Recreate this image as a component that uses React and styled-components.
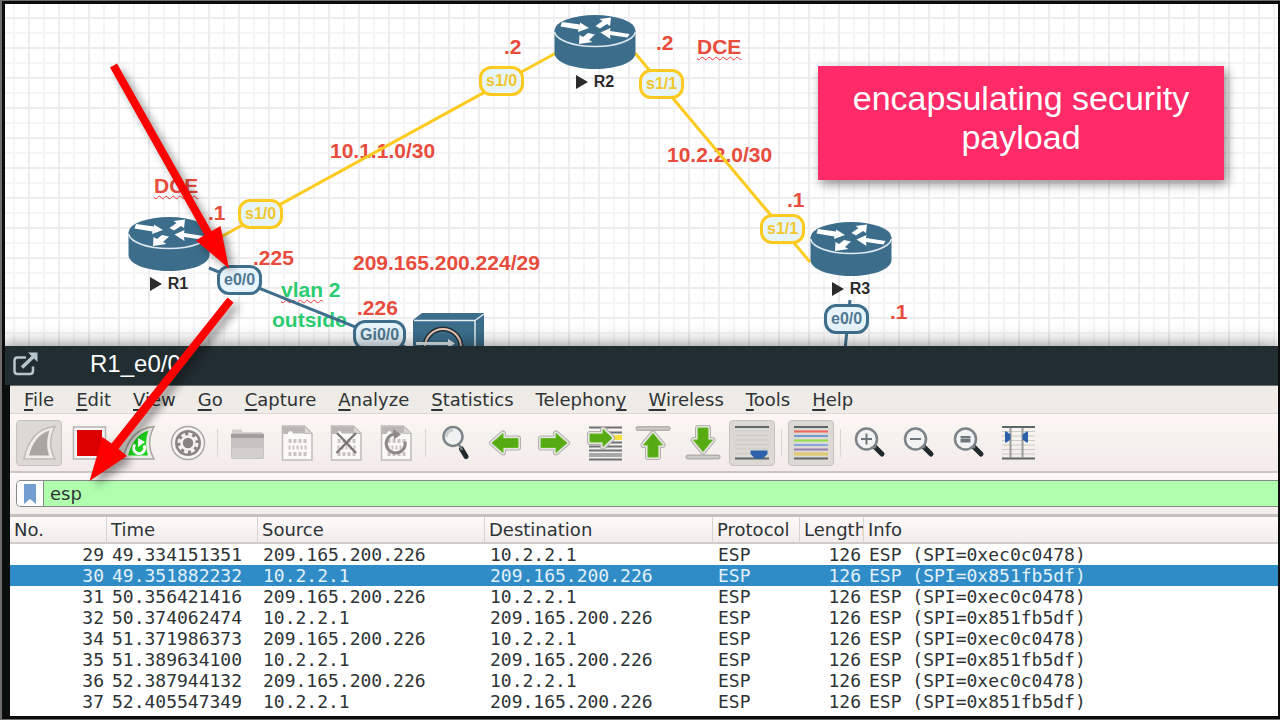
import React, { useState } from 'react';
import styled, { createGlobalStyle } from 'styled-components';

const menus = [
  ['', 'F', 'ile'],
  ['', 'E', 'dit'],
  ['', 'V', 'iew'],
  ['', 'G', 'o'],
  ['', 'C', 'apture'],
  ['', 'A', 'nalyze'],
  ['', 'S', 'tatistics'],
  ['Telephon', 'y', ''],
  ['', 'W', 'ireless'],
  ['', 'T', 'ools'],
  ['', 'H', 'elp'],
];

const columns = [
  { name: 'No.', width: 97, right: true },
  { name: 'Time', width: 151 },
  { name: 'Source', width: 227 },
  { name: 'Destination', width: 228 },
  { name: 'Protocol', width: 87 },
  { name: 'Length', width: 64, right: true },
  { name: 'Info' },
];

const PEER = '209.165.200.226';
const HOST = '10.2.2.1';

const packets = [
  [29, '49.334151351', PEER, HOST, 'ESP', 126, 'ESP (SPI=0xec0c0478)'],
  [30, '49.351882232', HOST, PEER, 'ESP', 126, 'ESP (SPI=0x851fb5df)'],
  [31, '50.356421416', PEER, HOST, 'ESP', 126, 'ESP (SPI=0xec0c0478)'],
  [32, '50.374062474', HOST, PEER, 'ESP', 126, 'ESP (SPI=0x851fb5df)'],
  [34, '51.371986373', PEER, HOST, 'ESP', 126, 'ESP (SPI=0xec0c0478)'],
  [35, '51.389634100', HOST, PEER, 'ESP', 126, 'ESP (SPI=0x851fb5df)'],
  [36, '52.387944132', PEER, HOST, 'ESP', 126, 'ESP (SPI=0xec0c0478)'],
  [37, '52.405547349', HOST, PEER, 'ESP', 126, 'ESP (SPI=0x851fb5df)'],
];

const notes = [
  { x: 504, y: 36, text: '.2' },
  { x: 656, y: 32, text: '.2' },
  { x: 697, y: 36, text: 'DCE', wavy: true },
  { x: 330, y: 140, text: '10.1.1.0/30' },
  { x: 667, y: 144, text: '10.2.2.0/30' },
  { x: 787, y: 189, text: '.1' },
  { x: 890, y: 301, text: '.1' },
  { x: 154, y: 175, text: 'DCE', wavy: true },
  { x: 208, y: 202, text: '.1' },
  { x: 253, y: 247, text: '.225' },
  { x: 353, y: 252, text: '209.165.200.224/29' },
  { x: 357, y: 297, text: '.226' },
];

const ports = [
  { x: 479, y: 66, text: 's1/0', serial: true },
  { x: 639, y: 69, text: 's1/1', serial: true },
  { x: 238, y: 199, text: 's1/0', serial: true },
  { x: 760, y: 214, text: 's1/1', serial: true },
  { x: 217, y: 265, text: 'e0/0' },
  { x: 824, y: 304, text: 'e0/0' },
  { x: 353, y: 320, text: 'Gi0/0' },
];

const routers = [
  { x: 554, y: 14, name: 'R2' },
  { x: 128, y: 216, name: 'R1' },
  { x: 810, y: 221, name: 'R3' },
];

const RouterIcon = () => (
  <svg width="82" height="56" viewBox="0 0 82 56">
    <path d="M0.5 17v22c0 9 18 16 40.500 16s40.500-7 40.500-16V17z" fill="#3c6e8b" />
    <ellipse cx="41" cy="16.500" rx="40.500" ry="15.500" fill="#3c6e8b" />
    <path d="M0.500 18c2 8 18 14.500 40.500 14.500S79.500 26 81.500 18" fill="none" stroke="#dfe9ef" strokeWidth="1.500" />
    <g fill="#fff">
      <path d="M8 8L26 10.500V8.500l9 5.500L24 18 24.500 15.500 6.500 12.500z" />
      <path d="M57 3.500L45.500 5l3 2-7 5 4.500 2.500 7-4.500 3 2z" />
      <path d="M25 30l0.500-9 3.500 2 5-4 7 1.500-6 5.500 3.500 2z" />
      <path d="M46.500 18.500l10-4.500-0.500 3L75.500 20l-2 3.500-17.500-2.500 0.500 4z" />
    </g>
  </svg>
);

const FirewallIcon = () => (
  <svg width="72" height="56" viewBox="0 0 72 56">
    <path d="M0 7L9 0h62v46l-9 10H0z" fill="#3c6e8b" />
    <path d="M1 7.500h61V56M62 7.500L71 1" fill="none" stroke="#e6eef3" strokeWidth="1.500" />
    <circle cx="30" cy="34" r="18" fill="none" stroke="#23313b" strokeWidth="5" />
    <circle cx="30" cy="34" r="18" fill="none" stroke="#e9c9b6" strokeWidth="2" />
    <path d="M3 29h32v-3l7 4.500-7 4.500v-3H3z" fill="#e6eef3" />
  </svg>
);

const PopoutIcon = () => (
  <svg width="26" height="26" viewBox="0 0 26 26" fill="none" stroke="#b6c5cc" strokeWidth="2.500">
    <path d="M13 6.500H4.500c-2 0-3 1-3 3V20c0 2 1 3 3 3H17c2 0 3-1 3-3v-4.500" />
    <path d="M9 16.500L22 4" strokeWidth="3.500" />
    <path d="M15 1.500h9.500V11z" fill="#b6c5cc" stroke="none" />
  </svg>
);

const FIN = 'M3 34C7 15 17 3 34 1.500 28.500 12 28.500 24 34 34z';
const FIN_INNER = 'M8 30.500C11 18 18 8.500 28.500 5.500 25.500 14 25.500 22 28 30.500z';
const LEFT = 'M5 18L16 8.500v5h15v9H16v5z';
const RIGHT = 'M31 18L20 8.500v5H5v9h15v5z';
const UP = 'M18 8.500L27.500 20H23v12H13V20H8.500z';
const DOWN = 'M18 26.500L8.500 15H13V3h10v12h4.500z';

const GreenArrow = ({ d }) => (
  <g strokeLinejoin="round">
    <path d={d} fill="none" stroke="#b3b1ae" strokeWidth="6" />
    <path d={d} fill="none" stroke="#e6e5e3" strokeWidth="4" />
    <path d={d} fill="#57ab12" stroke="#65b825" strokeWidth="1" />
  </g>
);

const Sheet = () => (
  <>
    <path d="M3.500 1h22L33 8.500V35H3.500z" fill="#fbfaf8" stroke="#bfbcb9" strokeWidth="1.500" />
    <path d="M4 1.500h21v7H14C13 5 10 5 8.500 9H4z" fill="#bab7b4" />
    <path d="M25.500 1v7.500H33z" fill="#d9d6d3" stroke="#bfbcb9" />
    <g stroke="#c7c4c1" strokeWidth="4" strokeDasharray="3 2">
      <path d="M9.500 16H28" />
      <path d="M9.500 22.500H28" strokeDasharray="2 2" />
      <path d="M9.500 29H28" />
    </g>
  </>
);

const Magnifier = ({ children }) => (
  <>
    <path d="M22.500 21.500L30 29" stroke="#202a2c" strokeWidth="5" strokeLinecap="round" />
    <path d="M20 19l4 4" stroke="#6d7476" strokeWidth="2.500" />
    <circle cx="14.500" cy="14" r="10.500" fill="#f2f4f4" stroke="#7d8588" strokeWidth="2.500" />
    <g stroke="#6f777a" strokeWidth="2">{children}</g>
  </>
);

const icons = {
  start: (
    <>
      <path d={FIN} fill="#efedea" stroke="#bebbb7" strokeWidth="1.500" />
      <path d={FIN_INNER} fill="#a9a6a2" />
    </>
  ),
  stop: (
    <>
      <rect x="2.500" y="2" width="32" height="32" fill="#f5f5f5" stroke="#b4b4b4" strokeWidth="1.500" />
      <rect x="6" y="5" width="25" height="26" fill="#dd0000" />
    </>
  ),
  restart: (
    <>
      <path d={FIN} fill="#efedea" stroke="#a9a6a2" strokeWidth="1.500" />
      <path d={FIN_INNER} fill="#1cd11c" />
      <path d="M15 19.500a5.500 5.500 0 1 0 9 1" fill="none" stroke="#fff" strokeWidth="3" />
      <path d="M18 13v9l7-5z" fill="#fff" />
    </>
  ),
  options: (
    <>
      <circle cx="18" cy="18" r="16.500" fill="#f7f5f3" stroke="#aaa8a6" strokeWidth="1.500" />
      <circle cx="18" cy="18" r="13" fill="#888684" />
      <circle cx="18" cy="18" r="9" fill="none" stroke="#f7f5f3" strokeWidth="3" strokeDasharray="4 3.070" />
      <circle cx="18" cy="18" r="6.500" fill="#888684" stroke="#f7f5f3" strokeWidth="2.500" />
    </>
  ),
  open: (
    <>
      <path d="M3 9V6c0-1 .5-1.500 1.500-1.500H12l2 2.500h19v5H3z" fill="#d2cfcc" />
      <rect x="2" y="8" width="33" height="26" rx="1.500" fill="#c5c2bf" />
      <rect x="2" y="9" width="33" height="4" fill="#a19e9b" />
      <rect x="3" y="23" width="31" height="10" fill="#d2cfcc" />
    </>
  ),
  save: <Sheet />,
  close: (
    <>
      <Sheet />
      <path d="M9 8l19 20M28 8L8.500 28" stroke="#7a7876" strokeWidth="2.500" />
    </>
  ),
  reload: (
    <>
      <Sheet />
      <path d="M27 16.500A9.500 9.500 0 1 1 17 9" fill="none" stroke="#8c8a88" strokeWidth="3" />
      <path d="M15 4l8 5.500-7 5z" fill="#8c8a88" />
    </>
  ),
  find: (
    <>
      <path d="M24.500 24L29 31.500" stroke="#202a2c" strokeWidth="5" strokeLinecap="round" />
      <path d="M21 18l4 7" stroke="#7d8588" strokeWidth="2.500" />
      <circle cx="16" cy="11.500" r="9.500" fill="#f0f2f2" stroke="#7d8588" strokeWidth="2.500" />
      <path d="M9 12a7 7 0 0 1 7-7" fill="none" stroke="#c8cdce" strokeWidth="3" />
    </>
  ),
  back: <GreenArrow d={LEFT} />,
  forward: <GreenArrow d={RIGHT} />,
  jump: (
    <>
      <g stroke="#6f7375" strokeWidth="2">
        <path d="M3 2.500h33M3 7.500h33M3 17.500h33M3 21.500h33M3 25.500h33M3 34.500h33" />
        <path d="M3 30h33" stroke="#a6a8a9" strokeWidth="4" />
        <path d="M27 12.500h9" stroke="#f9df3c" strokeWidth="5" />
      </g>
      <GreenArrow d="M26 13L17 4.500V9H4v8h13v4.500z" />
    </>
  ),
  first: (
    <>
      <path d="M3 3.500h30" stroke="#b3b1ae" strokeWidth="5" strokeLinecap="round" />
      <path d="M3 3.500h30" stroke="#cdcbc8" strokeWidth="2" strokeLinecap="round" />
      <GreenArrow d={UP} />
    </>
  ),
  last: (
    <>
      <path d="M3 32h30" stroke="#b3b1ae" strokeWidth="5" strokeLinecap="round" />
      <path d="M3 32h30" stroke="#cdcbc8" strokeWidth="2" strokeLinecap="round" />
      <GreenArrow d={DOWN} />
    </>
  ),
  follow: (
    <>
      <path d="M1 6h34M1 10.500h34M1 15h34M1 19.500h34M1 24h34M1 28.500h34" stroke="#c9cbc7" />
      <path d="M1 2h34M1 33.500h34" stroke="#5e6768" strokeWidth="2" />
      <path d="M16.500 25.500h17v3.500L29 33.500h-8L16.500 29z" fill="#2d62ab" />
    </>
  ),
  colorize: (
    <g strokeWidth="2">
      <path d="M1 2h34M1 33.500h34" stroke="#5e6768" />
      <path d="M1 6.500h34" stroke="#f1625c" />
      <path d="M1 11h34" stroke="#6f9bd0" />
      <path d="M1 15.500h34" stroke="#8fdf4a" />
      <path d="M1 20h34" stroke="#86a5dc" />
      <path d="M1 24.500h34" stroke="#9a80b0" />
      <path d="M1 29h34" stroke="#e2c96a" strokeWidth="3" />
    </g>
  ),
  zoomIn: (
    <Magnifier>
      <path d="M9 14h11M14.500 8.500v11" />
    </Magnifier>
  ),
  zoomOut: (
    <Magnifier>
      <path d="M9 14h11" />
    </Magnifier>
  ),
  zoomReset: (
    <Magnifier>
      <path d="M9.500 12h10M9.500 14.500h10M9.500 16.500h10" />
    </Magnifier>
  ),
  resize: (
    <>
      <path d="M2 6.500h33M2 11h33M2 15.500h33M2 20h33M2 24.500h33M2 29h33" stroke="#c9cbc7" />
      <path d="M2 2h33M2 33.500h33" stroke="#5e6768" strokeWidth="2" />
      <path d="M10.500 3v30M22.500 3v30" stroke="#9a9c98" strokeWidth="2" />
      <path d="M5 6.500h1.500l4 3v5l-4 3H5zM28 6.500h-1.500l-4 3v5l4 3H28z" fill="#2d62ab" />
    </>
  ),
};

const toolGroups = [
  { width: 195, tools: [['start', true], ['stop'], ['restart'], ['options']] },
  { width: 195, tools: [['open'], ['save'], ['close'], ['reload']] },
  { width: 343, tools: [['find'], ['back'], ['forward'], ['jump'], ['first'], ['last'], ['follow', true]] },
  { width: 46, tools: [['colorize', true]] },
  { width: 194, tools: [['zoomIn'], ['zoomOut'], ['zoomReset'], ['resize']] },
];

const Topology = () => (
  <Canvas>
    {notes.map(({ x, y, text, wavy }) => (
      <Note key={`${x}-${y}`} $x={x} $y={y}>
        {wavy ? <Wavy>{text}</Wavy> : text}
      </Note>
    ))}
    <Note $x={281} $y={279} $green>
      <Wavy>vlan</Wavy> 2
    </Note>
    <Note $x={272} $y={309} $green>
      outside
    </Note>
    <Links>
      <g stroke="#fdcb1f" strokeWidth="3">
        <path d="M208 244L556 53" />
        <path d="M635 53L810 262" />
      </g>
      <g stroke="#3f6f8d" strokeWidth="3">
        <path d="M209 268L420 353" />
        <path d="M850 300L845 350" />
      </g>
    </Links>
    {ports.map(({ x, y, text, serial }) => (
      <Port key={`${x}-${y}`} $x={x} $y={y} $serial={serial}>
        {text}
      </Port>
    ))}
    {routers.map(({ x, y, name }) => (
      <Router key={name} $x={x} $y={y}>
        <RouterIcon />
        <RouterName>
          <svg width="12" height="14" viewBox="0 0 12 14">
            <path d="M0 0l12 7-12 7z" fill="#2b2b2b" />
          </svg>
          {name}
        </RouterName>
      </Router>
    ))}
    <Router $x={413} $y={313}>
      <FirewallIcon />
    </Router>
    <Callout>encapsulating security payload</Callout>
  </Canvas>
);

const Toolbar = () => (
  <ToolRow>
    {toolGroups.map(({ width, tools }, i) => (
      <React.Fragment key={tools[0][0]}>
        {i > 0 && <Separator />}
        <ToolGroup $width={width}>
          {tools.map(([name, pressed]) => (
            <ToolButton key={name} type="button" aria-label={name} $pressed={pressed}>
              <svg width="36" height="36" viewBox="0 0 36 36" fill="none">
                {icons[name]}
              </svg>
            </ToolButton>
          ))}
        </ToolGroup>
      </React.Fragment>
    ))}
  </ToolRow>
);

const PacketTable = () => {
  const [selected, setSelected] = useState(30);

  return (
    <Table>
      <colgroup>
        {columns.map(({ name, width }) => (
          <col key={name} width={width} />
        ))}
      </colgroup>
      <thead>
        <tr>
          {columns.map(({ name }) => (
            <HeadCell key={name}>{name}</HeadCell>
          ))}
        </tr>
      </thead>
      <tbody>
        {packets.map((packet) => (
          <Row key={packet[0]} $selected={packet[0] === selected} onClick={() => setSelected(packet[0])}>
            {packet.map((value, i) => (
              <Cell key={columns[i].name} $right={columns[i].right}>
                {value}
              </Cell>
            ))}
          </Row>
        ))}
      </tbody>
    </Table>
  );
};

const App = () => {
  const [filter, setFilter] = useState('esp');

  return (
    <Page>
      <GlobalStyle />
      <Topology />
      <Window>
        <TitleBar>
          <PopoutIcon />
          <Title>R1_e0/0</Title>
        </TitleBar>
        <WindowBody>
          <MenuBar>
            {menus.map(([before, key, after]) => (
              <MenuItem key={before + key + after} type="button">
                {before}
                <u>{key}</u>
                {after}
              </MenuItem>
            ))}
          </MenuBar>
          <Toolbar />
          <FilterRow>
            <FilterBox>
              <Bookmark type="button" aria-label="Filter bookmarks">
                <svg width="12" height="20" viewBox="0 0 12 20">
                  <path d="M0 0h12v20l-6-5-6 5z" fill="#729fcf" />
                </svg>
              </Bookmark>
              <FilterInput
                aria-label="Display filter"
                value={filter}
                spellCheck={false}
                onChange={(e) => setFilter(e.target.value)}
              />
            </FilterBox>
          </FilterRow>
          <PacketTable />
        </WindowBody>
      </Window>
      <Pointers>
        <g fill="#fe0000">
          <path d="M110 67.500L117 63.500 211.500 231 220.500 226 229 268.500 196 240.500 204.500 235z" />
          <path d="M227.500 297.500L233.500 302.500 118.500 449 127 456 89.500 481 102.500 437 111.500 443.500z" />
        </g>
      </Pointers>
    </Page>
  );
};

export default App;

const GlobalStyle = createGlobalStyle`
  * {
    box-sizing: border-box;
  }

  body {
    margin: 0;
    font-family: 'DejaVu Sans', sans-serif;
    font-size: 18px;
    color: #2e3436;
  }

  button {
    padding: 0;
    border: none;
    background: none;
    font: inherit;
    color: inherit;
  }

  svg {
    display: block;
    flex: none;
  }
`;

const Page = styled.div`
  position: relative;
  display: flex;
  flex-direction: column;
  min-height: 100vh;
  overflow: hidden;

  &::after {
    content: '';
    position: absolute;
    inset: 1px 0 1px 2px;
    border: solid #0c0c0c;
    border-width: 3px 2px 3px 3px;
    outline: 2px solid #6e6e6e;
    pointer-events: none;
  }
`;

const Canvas = styled.main`
  position: relative;
  flex: 1;
  min-height: 346px;
  overflow: hidden;
  font-family: 'Liberation Sans', Arial, sans-serif;
  background-color: #fff;
  background-image: linear-gradient(90deg, #ededf0 2px, transparent 2px),
    linear-gradient(#ededf0 2px, transparent 2px),
    linear-gradient(90deg, #f5f5f7 2px, transparent 2px),
    linear-gradient(#f5f5f7 2px, transparent 2px);
  background-size: 30px 30px, 30px 30px, 15px 15px, 15px 15px;
  background-position: 28px 17px;
`;

const Note = styled.div`
  position: absolute;
  left: ${({ $x }) => $x}px;
  top: ${({ $y }) => $y}px;
  font-size: 21px;
  line-height: 21px;
  font-weight: bold;
  white-space: nowrap;
  color: ${({ $green }) => ($green ? '#2ecc71' : '#e74c3c')};
`;

const Wavy = styled.span`
  text-decoration: underline wavy #f0393b 1px;
  text-decoration-skip-ink: none;
  text-underline-offset: 2px;
`;

const Links = styled.svg`
  position: absolute;
  inset: 0;
  width: 100%;
  height: 100%;
`;

const Port = styled.div`
  position: absolute;
  left: ${({ $x }) => $x}px;
  top: ${({ $y }) => $y}px;
  padding: 0 4px;
  border: 3px solid ${({ $serial }) => ($serial ? '#fdcb1f' : '#3f6f8d')};
  border-radius: 12px;
  background: #e8f4fc;
  font-size: 16px;
  line-height: 24px;
  font-weight: bold;
  color: ${({ $serial }) => ($serial ? '#f0c62c' : '#4f7893')};
`;

const Router = styled.div`
  position: absolute;
  left: ${({ $x }) => $x}px;
  top: ${({ $y }) => $y}px;
  display: flex;
  flex-direction: column;
  align-items: center;
  gap: 2px;
`;

const RouterName = styled.div`
  display: flex;
  align-items: center;
  gap: 6px;
  font-size: 16px;
  line-height: 20px;
  font-weight: bold;
  color: #2b2b2b;
`;

const Callout = styled.div`
  position: absolute;
  left: 818px;
  top: 66px;
  width: 406px;
  padding: 13px 20px 23px;
  background: #ff2b68;
  box-shadow: 3px 4px 10px rgba(0, 0, 0, 0.45);
  font-size: 34px;
  line-height: 39px;
  text-align: center;
  color: #fff;
`;

const Window = styled.section`
  position: relative;
  border-left: 10px solid #0b0e0f;
  box-shadow: 0 0 18px rgba(0, 0, 0, 0.5);
`;

const TitleBar = styled.header`
  display: flex;
  align-items: center;
  gap: 51px;
  height: 39px;
  margin-left: -5px;
  padding: 0 8px 4px;
  background: #222d32;
`;

const Title = styled.h1`
  margin: 0;
  font-family: 'Liberation Sans', Arial, sans-serif;
  font-size: 24px;
  line-height: 24px;
  font-weight: normal;
  color: #fff;
`;

const WindowBody = styled.div`
  padding-bottom: 8px;
  border-top: 1px solid #6c6f70;
  background: #fff;
`;

const MenuBar = styled.nav`
  display: flex;
  gap: 22px;
  height: 28px;
  padding: 0 14px;
  background: #efebe7;
  border-bottom: 1px solid #dcd7d2;
`;

const MenuItem = styled.button`
  line-height: 26px;

  u {
    text-decoration-thickness: 2px;
    text-underline-offset: 3px;
    text-decoration-skip-ink: none;
  }
`;

const ToolRow = styled.div`
  display: flex;
  align-items: center;
  height: 59px;
  padding: 0 6px;
  background: linear-gradient(#fff6f6, #f6f3ee 35%, #f5f1ed 50%, #f4eaeb);
  border-bottom: 2px solid #cbc6c2;
`;

const ToolGroup = styled.div`
  flex: none;
  display: flex;
  justify-content: space-between;
  width: ${({ $width }) => $width}px;
`;

const ToolButton = styled.button`
  display: flex;
  align-items: center;
  justify-content: center;
  width: 46px;
  height: 46px;
  border: 1px solid ${({ $pressed }) => ($pressed ? '#c6c2be' : 'transparent')};
  border-radius: 4px;
  background: ${({ $pressed }) => ($pressed ? '#dcd8d4' : 'none')};
`;

const Separator = styled.span`
  flex: none;
  width: 1px;
  height: 28px;
  margin: 0 6px;
  background: #dbd6d3;
`;

const FilterRow = styled.div`
  padding: 7px 0 7px 6px;
  background: linear-gradient(#fdf8f8, #f3eeec);
  border-bottom: 3px solid #c6c0bd;
`;

const FilterBox = styled.div`
  display: flex;
  height: 27px;
  border: 1px solid #85888a;
  border-right: none;
  border-radius: 5px 0 0 5px;
  overflow: hidden;
`;

const Bookmark = styled.button`
  display: flex;
  align-items: center;
  justify-content: center;
  width: 26px;
  background: #fcfcfc;
`;

const FilterInput = styled.input`
  flex: 1;
  min-width: 0;
  padding: 0 6px;
  border: none;
  border-left: 1px solid #85888a;
  outline: none;
  background: #afffaf;
  font: inherit;
  color: inherit;
`;

const Table = styled.table`
  width: 100%;
  table-layout: fixed;
  border-collapse: separate;
  border-spacing: 0;
`;

const HeadCell = styled.th`
  height: 27px;
  padding: 0 0 0 4px;
  overflow: hidden;
  border-right: 1px solid #d8d2d0;
  border-bottom: 2px solid #d3cbc9;
  background: linear-gradient(#fffafa, #f1edeb);
  line-height: 24px;
  font-weight: normal;
  text-align: left;
  white-space: nowrap;
`;

const Row = styled.tr`
  background: ${({ $selected }) => ($selected ? '#308cc6' : '#fff')};
  color: ${({ $selected }) => ($selected ? '#e2f1fb' : '#2e3436')};
`;

const Cell = styled.td`
  height: 21px;
  padding: ${({ $right }) => ($right ? '0 3px' : '0 5px')};
  font-family: 'DejaVu Sans Mono', monospace;
  line-height: 21px;
  text-align: ${({ $right }) => ($right ? 'right' : 'left')};
  white-space: nowrap;
`;

const Pointers = styled.svg`
  position: absolute;
  inset: 0;
  width: 100%;
  height: 100%;
  pointer-events: none;
  filter: drop-shadow(5px 5px 4px rgba(0, 0, 0, 0.4));
`;
